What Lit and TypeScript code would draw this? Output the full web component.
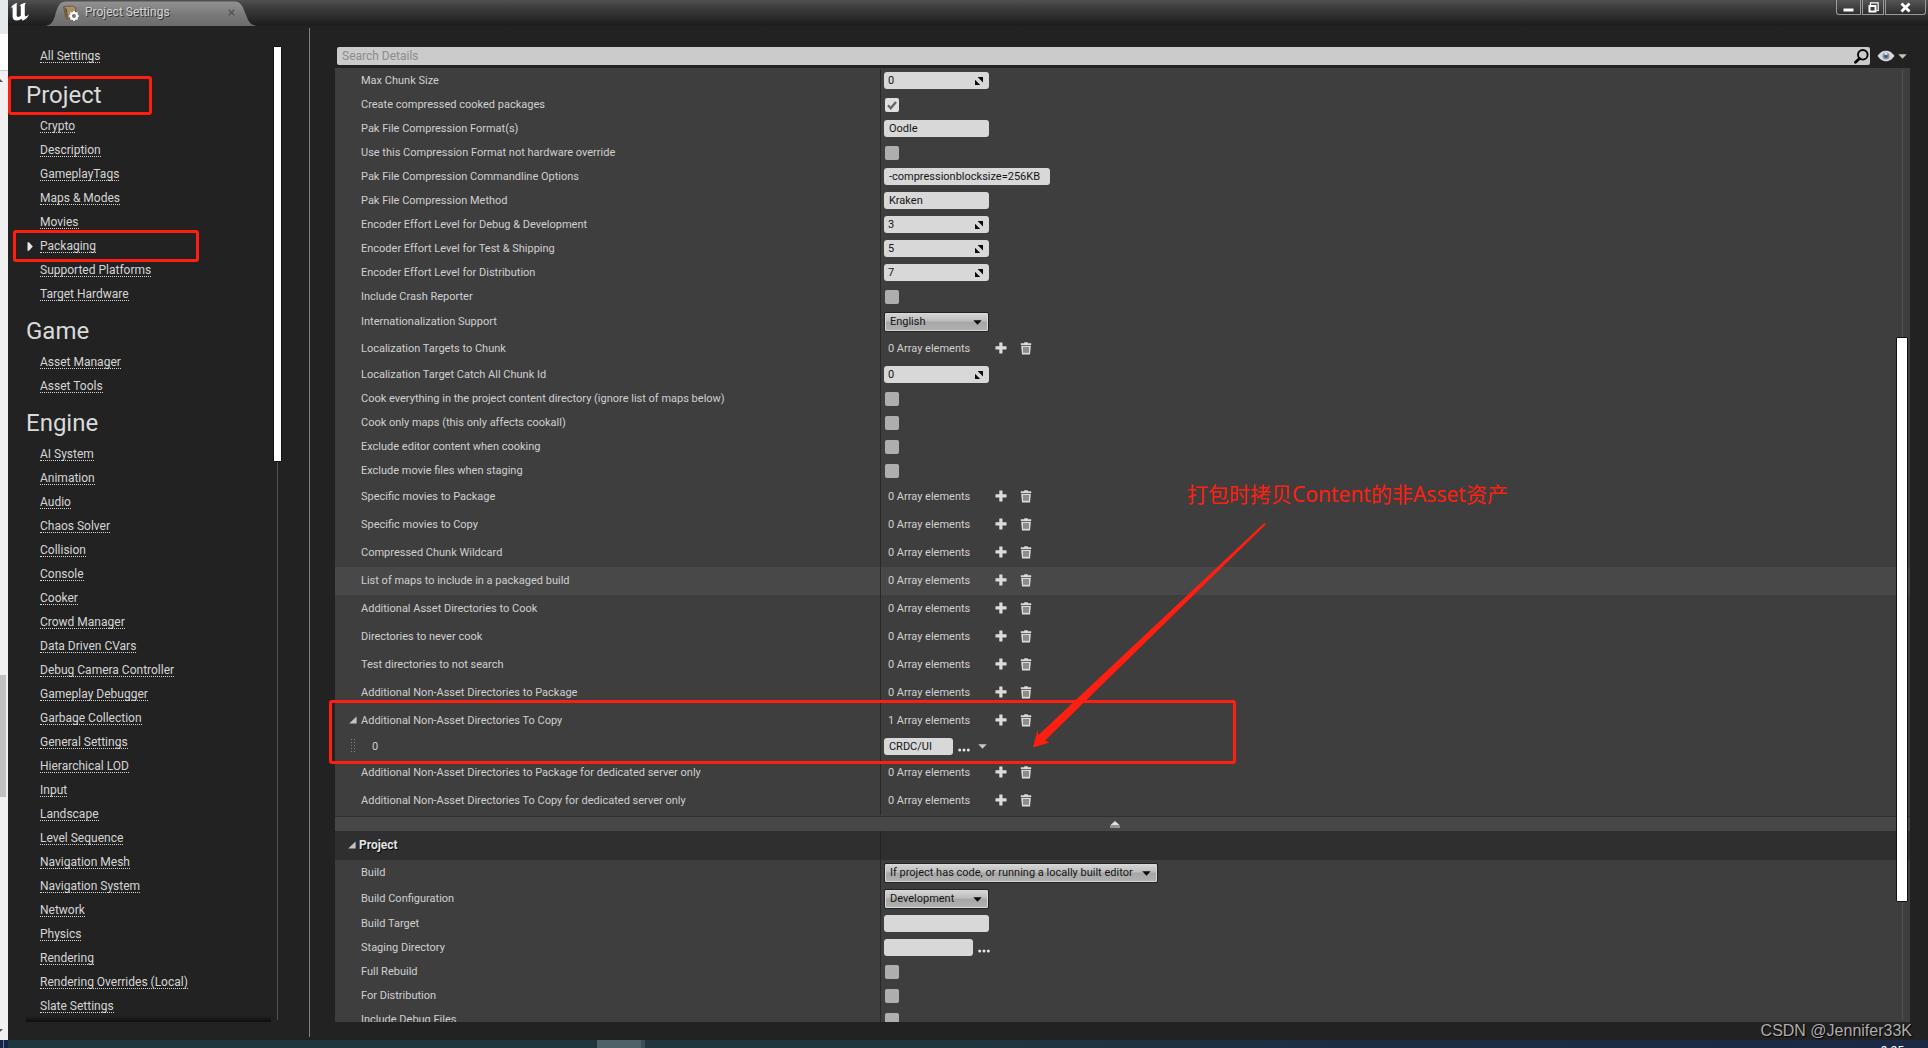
import { LitElement, html, css, svg, nothing, type TemplateResult } from "lit";
import { customElement, state } from "lit/decorators.js";
import { classMap } from "lit/directives/class-map.js";

type Kind = "number" | "check" | "text" | "select" | "array" | "path";

interface Property {
  label: string;
  kind: Kind;
  value?: string;
  size?: "short" | "medium" | "normal" | "wide" | "full";
  checked?: boolean;
  highlighted?: boolean;
  expanded?: boolean;
  element?: boolean;
}

interface Section {
  title: string;
  items: string[];
}

const SECTIONS: Section[] = [
  {
    title: "Project",
    items: ["Crypto", "Description", "GameplayTags", "Maps & Modes", "Movies", "Packaging", "Supported Platforms", "Target Hardware"],
  },
  { title: "Game", items: ["Asset Manager", "Asset Tools"] },
  {
    title: "Engine",
    items: [
      "AI System", "Animation", "Audio", "Chaos Solver", "Collision", "Console", "Cooker", "Crowd Manager",
      "Data Driven CVars", "Debug Camera Controller", "Gameplay Debugger", "Garbage Collection", "General Settings",
      "Hierarchical LOD", "Input", "Landscape", "Level Sequence", "Navigation Mesh", "Navigation System", "Network",
      "Physics", "Rendering", "Rendering Overrides (Local)", "Slate Settings",
    ],
  },
];

const PACKAGING: Property[] = [
  { label: "Max Chunk Size", kind: "number", value: "0" },
  { label: "Create compressed cooked packages", kind: "check", checked: true },
  { label: "Pak File Compression Format(s)", kind: "text", value: "Oodle" },
  { label: "Use this Compression Format not hardware override", kind: "check" },
  { label: "Pak File Compression Commandline Options", kind: "text", value: "-compressionblocksize=256KB", size: "wide" },
  { label: "Pak File Compression Method", kind: "text", value: "Kraken" },
  { label: "Encoder Effort Level for Debug & Development", kind: "number", value: "3" },
  { label: "Encoder Effort Level for Test & Shipping", kind: "number", value: "5" },
  { label: "Encoder Effort Level for Distribution", kind: "number", value: "7" },
  { label: "Include Crash Reporter", kind: "check" },
  { label: "Internationalization Support", kind: "select", value: "English" },
  { label: "Localization Targets to Chunk", kind: "array", value: "0" },
  { label: "Localization Target Catch All Chunk Id", kind: "number", value: "0" },
  { label: "Cook everything in the project content directory (ignore list of maps below)", kind: "check" },
  { label: "Cook only maps (this only affects cookall)", kind: "check" },
  { label: "Exclude editor content when cooking", kind: "check" },
  { label: "Exclude movie files when staging", kind: "check" },
  { label: "Specific movies to Package", kind: "array", value: "0" },
  { label: "Specific movies to Copy", kind: "array", value: "0" },
  { label: "Compressed Chunk Wildcard", kind: "array", value: "0" },
  { label: "List of maps to include in a packaged build", kind: "array", value: "0", highlighted: true },
  { label: "Additional Asset Directories to Cook", kind: "array", value: "0" },
  { label: "Directories to never cook", kind: "array", value: "0" },
  { label: "Test directories to not search", kind: "array", value: "0" },
  { label: "Additional Non-Asset Directories to Package", kind: "array", value: "0" },
  { label: "Additional Non-Asset Directories To Copy", kind: "array", value: "1", expanded: true },
  { label: "0", kind: "path", value: "CRDC/UI", size: "short", element: true },
  { label: "Additional Non-Asset Directories to Package for dedicated server only", kind: "array", value: "0" },
  { label: "Additional Non-Asset Directories To Copy for dedicated server only", kind: "array", value: "0" },
];

const PROJECT: Property[] = [
  { label: "Build", kind: "select", value: "If project has code, or running a locally built editor", size: "full" },
  { label: "Build Configuration", kind: "select", value: "Development" },
  { label: "Build Target", kind: "text", value: "" },
  { label: "Staging Directory", kind: "path", value: "", size: "medium" },
  { label: "Full Rebuild", kind: "check" },
  { label: "For Distribution", kind: "check" },
  { label: "Include Debug Files", kind: "check" },
];

const plusIcon = html`<svg width="12" height="12" viewBox="0 0 12 12" aria-hidden="true">
  <path d="M4.3 0.5h3.2v3.8h4v3.1h-4v4.1H4.3V7.4H0.5V4.3h3.8z" fill="#dcdcdc" />
</svg>`;

const trashIcon = html`<svg width="12" height="13" viewBox="0 0 12 13" aria-hidden="true">
  <path d="M4.2 0.3h3.6v1h3.4v2H0.8v-2h3.4z" fill="#dadada" />
  <path d="M1.2 3.9h9.6l-.8 8.6H2z" fill="#dadada" />
  <path d="M4 5v5.8M6 5v5.8M8 5v5.8" stroke="#3e3e3e" stroke-width="1" />
</svg>`;

const dotsIcon = html`<svg width="12" height="4" viewBox="0 0 12 4" aria-hidden="true">
  <circle cx="1.7" cy="2" r="1.5" fill="#e4e4e4" /><circle cx="6" cy="2" r="1.5" fill="#e4e4e4" /><circle cx="10.3" cy="2" r="1.5" fill="#e4e4e4" />
</svg>`;

const caretIcon = (fill: string) => html`<svg class="glyph" width="9" height="5" viewBox="0 0 9 5" aria-hidden="true">
  <path d="M0.3 0.3h8.4L4.5 4.8z" fill=${fill} />
</svg>`;

const spinIcon = html`<svg class="glyph spin" width="8" height="8" viewBox="0 0 8 8" aria-hidden="true">
  <path d="M2.6 0H8v5.4zM0 2.8V8h5.2z" fill="#0b0b0b" />
</svg>`;

const checkIcon = html`<svg class="tick" width="10" height="10" viewBox="0 0 10 10" aria-hidden="true">
  <path d="M1 5.3 3.7 8.2 9 2" fill="none" stroke="#666" stroke-width="2.4" />
</svg>`;

const cornerIcon = html`<svg width="8" height="8" viewBox="0 0 8 8" aria-hidden="true"><path d="M7.6 0.4v7H0.2z" fill="#c4c4c4" /></svg>`;

@customElement("app-root")
export class AppRoot extends LitElement {
  @state() private current = "Packaging";

  static styles = css`
    :host {
      display: block;
      height: 100vh;
      color: #d0d0d0;
      font-family: Roboto, "Noto Sans CJK SC", sans-serif;
      font-size: 11px;
      --mark: #ff1f10;
    }
    *, *::before, *::after { box-sizing: border-box; }
    svg { display: block; flex: none; }
    button, input, select { font: inherit; color: inherit; margin: 0; padding: 0; border: 0; border-radius: 0; background: none; }
    button { cursor: pointer; display: grid; place-items: center; }

    .desktop {
      position: relative;
      display: grid;
      grid-template: minmax(0, 1fr) 8px / 8px minmax(0, 1fr);
      height: 100%;
      overflow: hidden;
    }

    .behind { display: flex; flex-direction: column; background: #f0f0f0; overflow: hidden; }
    .behind-title { height: 34px; background: #e3e9ed; }
    .behind-page { height: 37px; background: #fff; border-bottom: 1px solid #cfcfcf; }
    .behind-arrow { margin: 8px 0 0 -3px; }
    .behind-gap { flex: 592; }
    .behind-thumb { flex: 122; width: 6px; background: #c1c1c1; }
    .behind-rest { flex: 232; }
    .behind-arrow.down { margin: 0 0 8px -3px; }

    .window { display: flex; flex-direction: column; background: #222; overflow: hidden; }

    .titlebar {
      display: flex;
      align-items: flex-start;
      flex: none;
      height: 26px;
      background: linear-gradient(#505050 0, #404040 6px, #303030 15px, #1d1d1d 25px);
    }
    .logo { margin: 2px 0 0 1px; }
    .tab {
      display: flex;
      align-items: center;
      gap: 6px;
      width: 212px;
      height: 25px;
      margin: 1px auto 0 14px;
      padding: 0 22px 4px 18px;
      clip-path: path("M0 25 C7 24 8 20 10 15 C12 7 14 1 20 0.5 H190 C197 1 198 7 201 14 C204 22 206 24 212 25 Z");
      background: linear-gradient(#929292, #777 60%, #6c6c6c);
      color: #d4d4d4;
      font-size: 12px;
      text-shadow: 1px 1px 0 #333;
    }
    .tab svg { margin-top: 2px; }
    .tab-title { flex: 1; }
    .window-buttons { display: flex; margin-right: 2px; }
    .window-buttons button {
      width: 22px;
      height: 15px;
      border: 1px solid #9a9a9a;
      border-top: 0;
      background: linear-gradient(#555, #2e2e2e);
    }
    .window-buttons button + button { margin-left: 1px; }
    .window-buttons .minimize { width: 25px; border-radius: 0 0 0 3px; }
    .window-buttons .close { width: 41px; border-radius: 0 0 3px 0; }

    .body { display: flex; flex: 1; min-height: 0; }

    .sidebar { display: flex; flex: none; width: 302px; padding: 20px 27px 18px 18px; border-right: 1px solid #808080; border-image: linear-gradient(#222 3px, #808080 3px, #808080 calc(100% - 4px), #222 calc(100% - 4px)) 1; }
    .nav { position: relative; flex: 1; overflow: hidden; }
    .nav::after {
      content: "";
      position: absolute;
      inset: auto 0 0 0;
      height: 6px;
      background: linear-gradient(transparent, #0e0e0e);
    }
    .nav ul { list-style: none; margin: 0; padding: 0; }
    .nav li { display: flex; height: 24px; padding-top: 6px; }
    .nav .all { display: flex; height: 24px; padding: 4px 0 0 14px; }
    .nav h2 { margin: 0; padding-top: 6px; font-size: 24px; line-height: 38px; font-weight: 400; color: #dadada; }
    .marker { width: 14px; padding-top: 2px; }
    .marker svg { margin-left: 1px; }
    .nav a {
      height: 13px;
      line-height: 12px;
      font-size: 12px;
      color: #d6d6d6;
      text-decoration: none;
      border-bottom: 1px dotted #d6d6d6;
      white-space: nowrap;
    }

    .scroll { display: flex; flex-direction: column; align-items: center; flex: none; background: linear-gradient(#505050, #505050) center / 1px 100% no-repeat; }
    .thumb { background: #fff; border: 1px solid #111; border-radius: 1px; }
    .nav-scroll { width: 9px; margin: 0 0 2px 2px; }
    .nav-scroll .thumb { flex: 415; width: 9px; }
    .nav-scroll .after { flex: 559; }
    .details-scroll { width: 14px; margin: 2px 1px 2px 0; justify-self: end; }
    .details-scroll .before { flex: 268; }
    .details-scroll .thumb { flex: 565; width: 12px; }
    .details-scroll .after { flex: 119; }

    .details { display: flex; flex: 1; min-width: 0; flex-direction: column; padding: 21px 18px 18px 25px; }
    .searchbar { display: flex; align-items: center; height: 18px; margin: 0 3px 3px 2px; }
    .search {
      display: flex;
      flex: 1;
      align-items: center;
      height: 18px;
      padding-right: 1px;
      background: #cbcbcb;
      border-radius: 2px;
    }
    .search input { flex: 1; height: 18px; padding-left: 5px; font-size: 12px; color: #222; outline: none; }
    .search input::placeholder { color: #8b8b8b; opacity: 1; }
    .view { display: flex; align-items: center; gap: 3px; margin-left: 7px; }

    .panel { display: grid; grid-template: minmax(0, 1fr) / minmax(0, 1fr); flex: 1; min-height: 0; background: #3e3e3e; overflow: hidden; }
    .panel > * { grid-area: 1 / 1; }
    .rows { padding-top: 1px; overflow: hidden; }

    .row { display: flex; height: 24px; }
    .row.select { height: 26px; }
    .row.array { height: 28px; }
    .row.highlighted { background: #484848; }
    .name { display: flex; flex: none; align-items: center; width: 34.6%; padding: 0 4px 2px 14px; white-space: nowrap; }
    .name .lead { width: 12px; }
    .name.element .lead { width: 23px; padding-left: 2px; }
    .value { display: flex; flex: 1; align-items: flex-start; padding: 3px 0 0 3px; border-left: 1px solid #282828; }
    .row.array .value { align-items: center; padding: 0 0 2px 7px; }

    .field { display: grid; align-items: center; color: #151515; }
    .field > * { grid-area: 1 / 1; }
    .field .glyph { justify-self: end; pointer-events: none; margin-right: 7px; }
    .field input { width: 105px; height: 17px; padding: 0 5px 1px; background: #d8d8d8; border-radius: 3px; }
    .field input.number { padding-left: 4px; }
    .field input.wide { width: 166px; }
    .field input.medium { width: 89px; }
    .field input.short { width: 69px; }
    .field .glyph.spin { margin-right: 6px; }
    .field select {
      appearance: none;
      width: 105px;
      height: 20px;
      padding: 0 18px 1px 5px;
      border: 1px solid #222;
      border-radius: 2px;
      background: linear-gradient(#d6d6d6, #bdbdbd 45%, #a6a6a6 50%, #b2b2b2);
      box-shadow: inset 0 0 0 1px #d8d8d8;
    }
    .field select.full { width: 274px; }

    .box { display: grid; place-items: center; margin: 2px 0 0 1px; }
    .box > * { grid-area: 1 / 1; }
    .box input { appearance: none; width: 14px; height: 14px; border-radius: 2px; background: #aeaeae; }
    .box input:checked { background: #e0e0e0; }
    .box .tick { visibility: hidden; pointer-events: none; }
    .box input:checked + .tick { visibility: visible; }

    .count { width: 102px; white-space: nowrap; }
    .value .add { width: 23px; height: 20px; }
    .value .clear { width: 23px; height: 20px; margin-left: 2px; }
    .value .browse { width: 22px; height: 17px; padding-top: 6px; }
    .value .more { width: 16px; height: 17px; }

    .advanced { display: grid; place-items: center; width: 100%; height: 14px; margin-top: 2px; padding-right: 15px; background: #474747; box-shadow: 0 -1px 0 #303030; }
    .category { display: flex; height: 29px; background: #2f2f2f; }
    .category h3 {
      display: flex;
      flex: none;
      align-items: center;
      gap: 3px;
      width: 34.6%;
      margin: 0;
      padding: 0 0 1px 13px;
      font-size: 12px;
      font-weight: 700;
      color: #e2e2e2;
      text-shadow: 1px 1px 0 #000;
    }
    .category .rest { flex: 1; border-left: 1px solid #222; }

    .taskbar {
      grid-column: 1 / -1;
      display: flex;
      justify-content: space-between;
      overflow: hidden;
      background: linear-gradient(90deg, #17244a 3px, #6d7c93 3px, #6d7c93 4px, #17244a 4px, #17244a 8px, #20363f 8px, #20363f 50%, #1c2d43 70%, #1b2945);
    }
    .task { width: 48px; margin-left: 597px; background: #4d6168; border-right: 4px solid #3a4e57; }
    .clock { margin: 5px 24px 0 0; font-size: 12px; line-height: 12px; color: #fff; }

    .mark { position: absolute; border: 3px solid var(--mark); border-radius: 3px; pointer-events: none; }
    .mark-section { left: 8px; top: 76px; width: 144px; height: 39px; }
    .mark-item { left: 13px; top: 230px; width: 186px; height: 32px; }
    .mark-rows { left: 329px; top: 700px; width: 907px; height: 64px; }
    .arrow { position: absolute; left: 1030px; top: 520px; pointer-events: none; }
    .note {
      position: absolute;
      left: 1187px;
      top: 480px;
      margin: 0;
      font: 21px/28px "Noto Sans", "Noto Sans CJK SC", sans-serif;
      color: var(--mark);
      white-space: nowrap;
    }
    .watermark {
      position: absolute;
      right: 16px;
      bottom: 7px;
      font: 16px/20px "Liberation Sans", sans-serif;
      color: #adadad;
      text-shadow: 1px 1px 1px #000;
    }
  `;

  private go(event: Event, name: string) {
    event.preventDefault();
    this.current = name;
  }

  private navItem(name: string) {
    return html`<li>
      <span class="marker">
        ${name === this.current
          ? html`<svg width="6" height="9" viewBox="0 0 6 9" aria-hidden="true"><path d="M0.5 0.3H2L5.8 4.5 2 8.7H0.5z" fill="#e6e6e6" /></svg>`
          : nothing}
      </span>
      <a href="#" @click=${(e: Event) => this.go(e, name)}>${name}</a>
    </li>`;
  }

  private control(p: Property, id: string): TemplateResult {
    const size = p.size ?? "normal";
    switch (p.kind) {
      case "number":
        return html`<span class="field"><input class="number" id=${id} type="text" inputmode="numeric" .value=${p.value ?? ""} />${spinIcon}</span>`;
      case "check":
        return html`<span class="box"><input id=${id} type="checkbox" .checked=${p.checked ?? false} />${checkIcon}</span>`;
      case "select":
        return html`<span class="field"><select class=${size} id=${id}><option>${p.value}</option></select>${caretIcon("#0b0b0b")}</span>`;
      case "array":
        return html`<span class="count" id=${id}>${p.value} Array elements</span>
          <button class="add" aria-label="Add element">${plusIcon}</button>
          <button class="clear" aria-label="Remove all elements">${trashIcon}</button>`;
      case "path":
        return html`<span class="field"><input class=${size} id=${id} type="text" .value=${p.value ?? ""} /></span>
          <button class="browse" aria-label="Browse">${dotsIcon}</button>
          ${p.element ? html`<button class="more" aria-label="Element options">${caretIcon("#c8c8c8")}</button>` : nothing}`;
      default:
        return html`<span class="field"><input class=${size} id=${id} type="text" .value=${p.value ?? ""} /></span>`;
    }
  }

  private row(p: Property, id: string) {
    const grip = html`<svg width="5" height="14" viewBox="0 0 5 14" aria-hidden="true">
      ${[0, 3, 6, 9, 12].map((y) => svg`<path d="M0 ${y}h1v1h-1zM3 ${y}h1v1h-1z" fill="#858585" />`)}
    </svg>`;
    const text = p.kind === "array" ? html`<span>${p.label}</span>` : html`<label for=${id}>${p.label}</label>`;
    return html`<div class=${classMap({ row: true, [p.kind]: true, highlighted: !!p.highlighted })}>
      <div class=${classMap({ name: true, element: !!p.element })}>
        <span class="lead">${p.expanded ? cornerIcon : p.element ? grip : nothing}</span>${text}
      </div>
      <div class="value">${this.control(p, id)}</div>
    </div>`;
  }

  render() {
    return html`<div class="desktop">
      <div class="behind">
        <div class="behind-title"></div>
        <div class="behind-page"></div>
        <svg class="behind-arrow" width="6" height="3" viewBox="0 0 6 3" aria-hidden="true"><path d="M0 3 3 0l3 3z" fill="#505050" /></svg>
        <div class="behind-gap"></div>
        <div class="behind-thumb"></div>
        <div class="behind-rest"></div>
        <svg class="behind-arrow down" width="6" height="3" viewBox="0 0 6 3" aria-hidden="true"><path d="M0 0h6L3 3z" fill="#505050" /></svg>
      </div>

      <div class="window">
        <header class="titlebar">
          <svg class="logo" width="22" height="20" viewBox="0 0 22 20" aria-hidden="true">
            <path d="M1 7.4C2 4.3 4.600 1.500 8.800.7 7.900 1.400 7.700 2 7.700 3v10.300c0 1 .6 1.600 1.400 1.600 1 0 2-.6 2.700-1.300V4.600c0-.8-.5-1.200-1.300-1.100 1.500-1.500 4.100-2.500 6.700-2.800-1 .8-1.400 1.500-1.400 2.800v9.200c0 1 .5 1.500 1.300 1.500 1 0 2-.9 2.900-2.100-.9 3.300-3.400 5.500-6.200 6.600l-1.600-1.900c-1 .9-2.200 1.700-4.500 1.800C5 18.600 3.600 17 3.600 14.500V6.300c0-.7-.3-1.100-.8-1C2.100 5.400 1.500 6.300 1 7.400z" fill="#fff" />
          </svg>
          <div class="tab">
            <svg width="16" height="16" viewBox="0 0 16 16" aria-hidden="true">
              <path d="M0.500 1.500 10 1l3 2-1 5-6 6-3-1z" fill="#a88f6b" stroke="#5f4d35" stroke-width=".8" />
              <path d="M1 2l3 2 1 9-2-1z" fill="#6c5738" />
              <circle cx="11" cy="11" r="3" fill="none" stroke="#fff" stroke-width="2" />
              <path d="M11 6v2M11 14v2M6 11h2M14 11h2M7.500 7.500 9 9M13 13l1.500 1.500M14.500 7.500 13 9M9 13l-1.500 1.500" stroke="#fff" stroke-width="1.700" />
            </svg>
            <span class="tab-title">Project Settings</span>
            <button aria-label="Close tab">
              <svg width="7" height="7" viewBox="0 0 7 7" aria-hidden="true"><path d="M.7.7l5.600 5.600M6.300.7.7 6.300" stroke="#4c4c4c" stroke-width="1.200" /></svg>
            </button>
          </div>
          <div class="window-buttons">
            <button class="minimize" aria-label="Minimize"><svg width="11" height="11" viewBox="0 0 11 11" aria-hidden="true"><path d="M.5 6.500h10v3H.5z" fill="#fff" /></svg></button>
            <button aria-label="Restore"><svg width="11" height="11" viewBox="0 0 11 11" aria-hidden="true"><path d="M2.500 3V.8h7.700v7.700H8.500" fill="none" stroke="#fff" stroke-width="1.200" /><path d="M1.500 4h6v5.500h-6z" fill="none" stroke="#fff" stroke-width="2" /></svg></button>
            <button class="close" aria-label="Close"><svg width="11" height="11" viewBox="0 0 11 11" aria-hidden="true"><path d="M1.500 1.500l8 8M9.500 1.500l-8 8" stroke="#fff" stroke-width="2.800" /></svg></button>
          </div>
        </header>

        <div class="body">
          <div class="sidebar">
            <nav class="nav" aria-label="Settings">
              <div class="all"><a href="#">All Settings</a></div>
              ${SECTIONS.map((s) => html`<h2>${s.title}</h2><ul>${s.items.map((i) => this.navItem(i))}</ul>`)}
            </nav>
            <div class="scroll nav-scroll"><div class="thumb"></div><div class="after"></div></div>
          </div>

          <main class="details">
            <div class="searchbar">
              <div class="search">
                <input type="search" aria-label="Search Details" placeholder="Search Details" />
                <svg width="15" height="16" viewBox="0 0 15 16" aria-hidden="true">
                  <circle cx="8.800" cy="6.800" r="4.800" fill="none" stroke="#050505" stroke-width="1.900" />
                  <path d="M5.500 10.500 1.500 14.200" stroke="#050505" stroke-width="2.800" stroke-linecap="round" />
                </svg>
              </div>
              <button class="view" aria-label="View options">
                <svg width="18" height="12" viewBox="0 0 17 12" aria-hidden="true">
                  <path d="M0 6C3 2 5.500.8 8.500.8S14 2 17 6c-3 4-5.500 5.200-8.500 5.200S3 10 0 6z" fill="#d9d9d9" />
                  <circle cx="8.500" cy="6" r="3.500" fill="#8391ae" /><circle cx="8.500" cy="6.300" r="1.600" fill="#46526e" /><circle cx="8.500" cy="3.800" r="1.300" fill="#e8ecf4" />
                </svg>
                ${caretIcon("#c4c4c4")}
              </button>
            </div>
            <div class="panel">
              <div class="rows">
                ${PACKAGING.map((p, i) => this.row(p, `packaging-${i}`))}
                <button class="advanced" aria-label="Hide advanced">
                  <svg width="10" height="7" viewBox="0 0 10 7" aria-hidden="true"><path d="M0 4.500 5 0l5 4.500zM0 5.500h10v1H0z" fill="#e0e0e0" /></svg>
                </button>
                <div class="category"><h3>${cornerIcon}Project</h3><div class="rest"></div></div>
                ${PROJECT.map((p, i) => this.row(p, `project-${i}`))}
              </div>
              <div class="scroll details-scroll"><div class="before"></div><div class="thumb"></div><div class="after"></div></div>
            </div>
          </main>
        </div>
      </div>

      <footer class="taskbar"><div class="task"></div><div class="clock">9:25</div></footer>

      <div class="mark mark-section"></div>
      <div class="mark mark-item"></div>
      <div class="mark mark-rows"></div>
      <svg class="arrow" width="240" height="230" viewBox="1030 520 240 230" aria-hidden="true">
        <path d="M1033 747.500 1037.500 730.500 1038.500 735 1264.500 522.800 1266 524.200 1045 740.500 1049.500 742.500z" fill="#ff1f10" />
      </svg>
      <p class="note">打包时拷贝Content的非Asset资产</p>
      <div class="watermark">CSDN @Jennifer33K</div>
    </div>`;
  }
}
